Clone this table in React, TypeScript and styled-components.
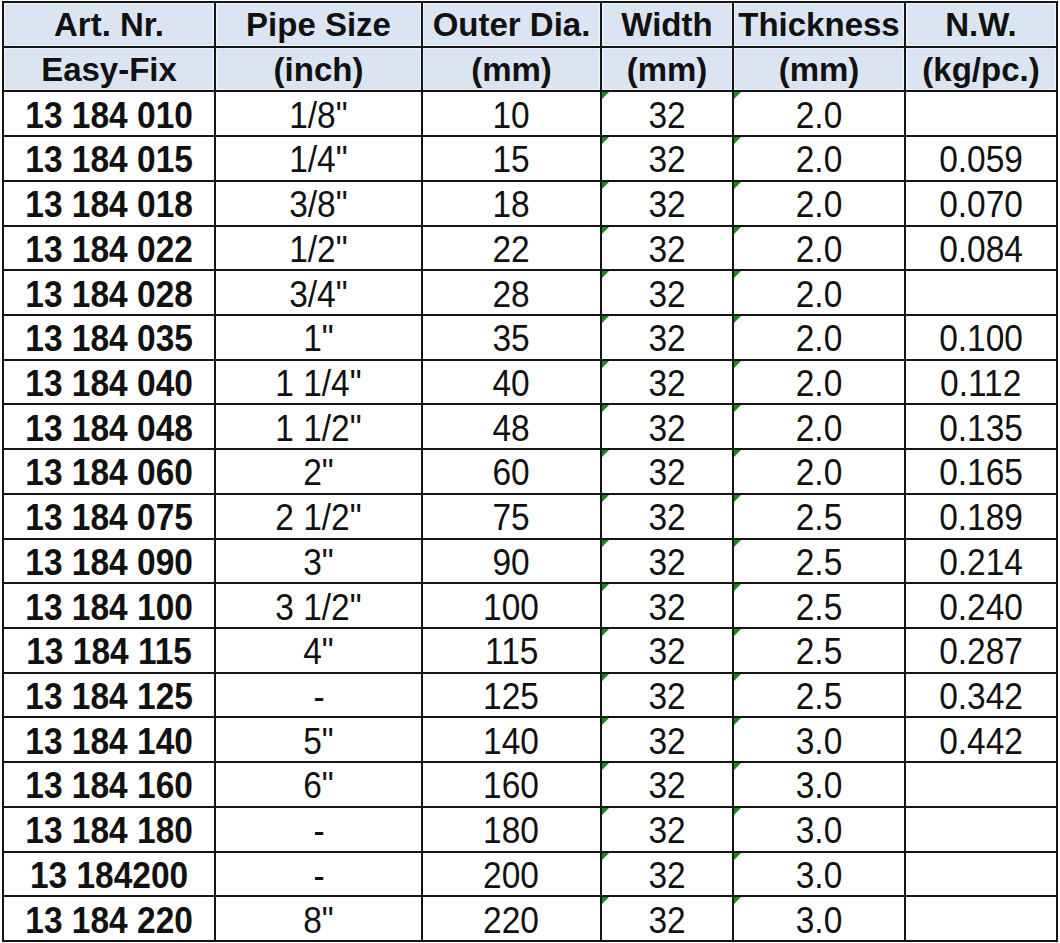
import styled, { createGlobalStyle } from "styled-components";

const GlobalStyle = createGlobalStyle`
  html, body {
    margin: 0;
    padding: 0;
    background: #ffffff;
  }
  body {
    font-family: "Liberation Sans", Arial, sans-serif;
    color: #111;
  }
`;

const headers = [
  ["Art. Nr.", "Easy-Fix"],
  ["Pipe Size", "(inch)"],
  ["Outer Dia.", "(mm)"],
  ["Width", "(mm)"],
  ["Thickness", "(mm)"],
  ["N.W.", "(kg/pc.)"],
];

// art nr, pipe size, outer dia, width, thickness, weight
const rows = [
  ["13 184 010", '1/8"', "10", "32", "2.0", ""],
  ["13 184 015", '1/4"', "15", "32", "2.0", "0.059"],
  ["13 184 018", '3/8"', "18", "32", "2.0", "0.070"],
  ["13 184 022", '1/2"', "22", "32", "2.0", "0.084"],
  ["13 184 028", '3/4"', "28", "32", "2.0", ""],
  ["13 184 035", '1"', "35", "32", "2.0", "0.100"],
  ["13 184 040", '1 1/4"', "40", "32", "2.0", "0.112"],
  ["13 184 048", '1 1/2"', "48", "32", "2.0", "0.135"],
  ["13 184 060", '2"', "60", "32", "2.0", "0.165"],
  ["13 184 075", '2 1/2"', "75", "32", "2.5", "0.189"],
  ["13 184 090", '3"', "90", "32", "2.5", "0.214"],
  ["13 184 100", '3 1/2"', "100", "32", "2.5", "0.240"],
  ["13 184 115", '4"', "115", "32", "2.5", "0.287"],
  ["13 184 125", "-", "125", "32", "2.5", "0.342"],
  ["13 184 140", '5"', "140", "32", "3.0", "0.442"],
  ["13 184 160", '6"', "160", "32", "3.0", ""],
  ["13 184 180", "-", "180", "32", "3.0", ""],
  ["13 184200", "-", "200", "32", "3.0", ""],
  ["13 184 220", '8"', "220", "32", "3.0", ""],
];

const Sheet = styled.div`
  margin: 1px 0 0 2px;
  width: 1056px;
  height: 941px;
  box-sizing: border-box;
  padding: 2px;
  background: #141414;
  display: grid;
  grid-template-columns: 210px 205px 177px 130px 170px 150px;
  grid-template-rows: repeat(21, minmax(0, 1fr));
  gap: 2px;
`;

const HeaderCell = styled.div`
  background: #dbe5f1;
  box-shadow: inset 0 0 0 1px #eef3f9;
  display: flex;
  align-items: center;
  justify-content: center;
  font-size: 33px;
  line-height: 1;
  font-weight: 700;
  white-space: nowrap;
  overflow: hidden;
`;

const Cell = styled.div<{ $mark?: boolean }>`
  position: relative;
  min-height: 0;
  background: #ffffff;
  display: flex;
  align-items: center;
  justify-content: center;
  padding-top: 4px;
  box-sizing: border-box;
  white-space: nowrap;

  &::before {
    content: "";
    display: ${(p) => (p.$mark ? "block" : "none")};
    position: absolute;
    top: 0;
    left: 0;
    border-top: 7px solid #178a17;
    border-right: 7px solid transparent;
  }
`;

// the scan is a little narrower than it is tall
const Value = styled.span<{ $bold?: boolean }>`
  display: inline-block;
  font-size: 36px;
  line-height: 1;
  font-weight: ${(p) => (p.$bold ? 700 : 400)};
  transform: scaleX(0.93);
`;

export default function App() {
  return (
    <>
      <GlobalStyle />
      <Sheet>
        {headers.map((h) => (
          <HeaderCell key={h[0]}>{h[0]}</HeaderCell>
        ))}
        {headers.map((h) => (
          <HeaderCell key={h[1] + h[0]}>{h[1]}</HeaderCell>
        ))}
        {rows.map((r) =>
          r.map((v, i) => (
            <Cell key={r[0] + i} $mark={i === 3 || i === 4}>
              <Value $bold={i === 0}>{v}</Value>
            </Cell>
          ))
        )}
      </Sheet>
    </>
  );
}
